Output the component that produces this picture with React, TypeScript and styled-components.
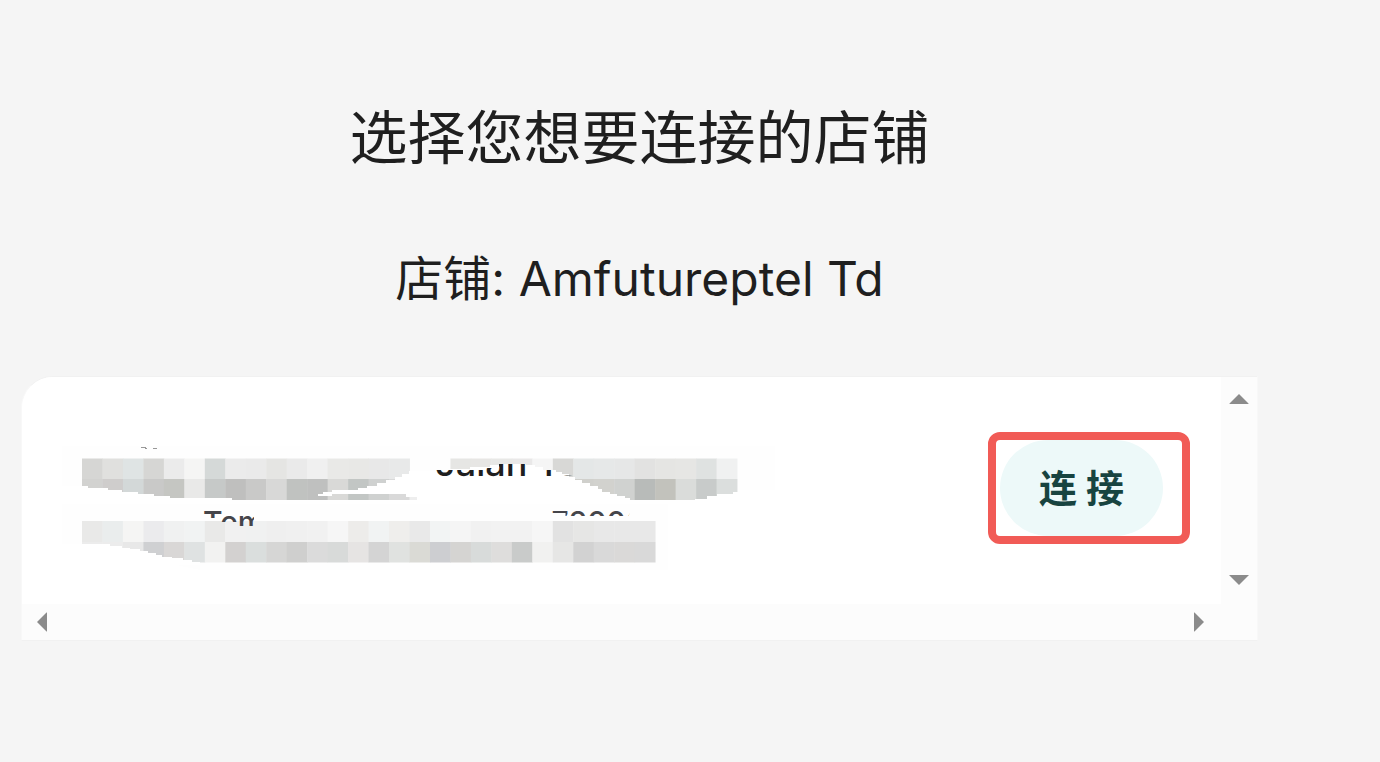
import React from "react";
import styled, { createGlobalStyle } from "styled-components";

const GlobalStyle = createGlobalStyle`
  *, *::before, *::after { box-sizing: border-box; }
  body {
    margin: 0;
    background: #f5f5f5;
    color: #1f1f1f;
    font-family: Inter, "Noto Sans CJK SC", sans-serif;
  }
`;

const Page = styled.main`
  display: flex;
  flex-direction: column;
  padding: 98px 122px 120px 21px;
`;

const Title = styled.h1`
  margin: 0;
  font-size: 58px;
  line-height: 80px;
  font-weight: 400;
  text-align: center;
`;

const ShopName = styled.h2`
  margin: 69px 0 65px;
  font-size: 48px;
  line-height: 64px;
  font-weight: 400;
  text-align: center;
`;

const ScrollPanel = styled.section`
  display: grid;
  grid-template-columns: 1fr 36px;
  grid-template-rows: auto 36px;
  overflow: hidden;
  background: #fcfcfc;
  border: 1px solid #f1f1f1;
  border-left-color: #f8f8f8;
  border-right-color: #f8f8f8;
  border-top-left-radius: 32px;
`;

const ShopRow = styled.div`
  display: flex;
  align-items: center;
  justify-content: space-between;
  min-width: 0;
  min-height: 227px;
  padding: 0 31px 5px 0;
  background: #ffffff;
`;

const Details = styled.div`
  position: relative;
  flex: 1;
  align-self: stretch;
  display: flex;
  flex-direction: column;
  gap: 19px;
  min-width: 0;
  padding-top: 64px;
`;

const Mosaic = styled.svg`
  position: absolute;
  top: 0;
  left: 0;
`;

const DetailLine = styled.div<{ $small?: boolean; $indent: number }>`
  position: relative;
  display: flex;
  justify-content: flex-start;
  gap: 287px;
  padding-left: ${(p) => p.$indent}px;
  font-size: ${(p) => (p.$small ? 30 : 36)}px;
  line-height: ${(p) => (p.$small ? 36 : 44)}px;
  font-weight: 500;
  color: ${(p) => (p.$small ? "#45454a" : "#1f1f1f")};
  white-space: nowrap;
`;

const Fragment = styled.span<{ $clip: string }>`
  clip-path: polygon(${(p) => p.$clip});
`;

const Highlight = styled.div`
  flex: none;
  padding: 0 19px 0 4px;
  border: 8px solid #f15b56;
  border-radius: 12px;
`;

const ConnectButton = styled.button`
  display: block;
  width: 163px;
  height: 96px;
  padding: 0 0 6px;
  border: 0;
  border-radius: 48px;
  background: #edf9f9;
  color: #184440;
  font: inherit;
  font-size: 38px;
  font-weight: 700;
  cursor: pointer;
`;

const Track = styled.div<{ $vertical?: boolean }>`
  display: flex;
  flex-direction: ${(p) => (p.$vertical ? "column" : "row")};
  justify-content: space-between;
  padding: ${(p) => (p.$vertical ? "4px 0 6px" : "0 4px 0 2px")};
`;

const ArrowButton = styled.button`
  display: grid;
  place-items: center;
  width: 36px;
  height: 36px;
  padding: 0;
  border: 0;
  background: transparent;
`;

const arrows = {
  up: "M8.5 23 V22.5 L18 13 L27.5 22.5 V23 Z",
  down: "M8.5 13 H27.5 V13.5 L18 23 L8.5 13.5 Z",
  left: "M13 18 L22.5 8.5 H23 V27.5 H22.5 Z",
  right: "M13 8.5 H13.5 L23 18 L13.5 27.5 H13 Z",
};

function Arrow({ dir, label }: { dir: keyof typeof arrows; label: string }) {
  return (
    <ArrowButton type="button" aria-label={label}>
      <svg width="36" height="36" viewBox="0 0 36 36" aria-hidden="true">
        <path d={arrows[dir]} fill="#8b8b8b" />
      </svg>
    </ArrowButton>
  );
}

// Pixelation tiles, one colour per tile; "-" leaves a tile out.
const tiles = [
  {
    y: 458.5,
    colors:
      "d6d6d4 e0e0de dfe4e4 d6d6d4 ebebeb f5f5f4 d5d9d8 ebebeb eaeaea e5e5e3 eaeaea f0f0f0 e9e9e7 e8e8e6 e8e8e8 e8e9e9 - - e6e6e4 e7e6e4 e8e8e6 e9e8e8 f5f5f5 d8d8d6 e4e7e7 e6e8e8 e6e7e7 e2e2e1 e5e5e3 e6e6e4 dfe2e1 f0f1f1",
  },
  {
    y: 479,
    colors:
      "d2d2d0 cfcdcc d3d8d8 c9c9c8 c5c6c2 e9e9e8 c6c9c8 bfbfbe c9c9c8 d8d8d7 c0c2c0 bfc0bf d9d9d7 c2c6c4 cfd1d0 d9d9d9 eeeeee - - - - - - d0d0cc d0d0cc d2d2ce d0d2d0 b8bbb9 c2c2bc dadcda c8cbca dbdedd",
  },
  {
    y: 521,
    colors:
      "e9e9e8 eaeded f5f5f4 ebebed f0f1f1 f1f3f3 e9e9e8 f1f1f1 f0f1f1 efefef f0f0f0 f1f1f1 f6f6f6 edecea f1f3f3 efeeec e9e9e9 f2f4f4 f5f5f5 f1f1f1 f2f2f2 f2f2f2 f6f6f6 e2e2e2 e6e6e5 e8e8e8 e8e8e8 e8e8e8",
  },
  {
    y: 542,
    colors:
      "ececec ececec e8e8e8 cfd0d2 d9d7d6 dfe2e2 f2f2f1 d3d1d0 dadedd d6d6d5 cfcfce dbdbdb d8dad9 e6e4e3 d4d4d4 e0e2e0 dadad5 cdced1 d5d4d2 d8dbda dedddc c9cbca f1f1f0 e6e6e5 d2d2d2 d9d9d9 dad9d8 d9d9d9",
  },
];

const TILE = 20.47;

function Redaction() {
  return (
    <Mosaic width="760" height="227" viewBox="22 377 760 227" aria-hidden="true">
      <g fill="#fefefe">
        <path d="M62 446H775V490H737V500H62Z" />
        <path d="M62 504H668V570H200L82 545H62Z" />
      </g>
      {tiles.map((row) =>
        row.colors.split(" ").map((c, i) =>
          c === "-" ? null : (
            <rect
              key={`${row.y}-${i}`}
              x={82 + i * TILE}
              y={row.y}
              width={TILE + 0.4}
              height={row.y === 479 || row.y === 521 ? 21 : 20.5}
              fill={`#${c}`}
            />
          )
        )
      )}
      {/* Brush strokes that wipe parts of the tiles away */}
      <g fill="#ffffff" shapeRendering="crispEdges">
        <path d="M60 486H88V488H108V490H122V492H138V494H154V496H170V498H232V500H254V502H60Z" />
        <path d="M318 494H323V492H332V490H358V488H367V486H377V483H386V480H395V477H402V474H409V471H450V469H470V467H490V465H503V464H526V465H535V467H543V470H556V472H562V474H569V477H575V480H582V483H590V486H598V489H602V492H610V494H617V496H625V498H630V502H425V500H417V497H406V494H332V496H318Z" />
        <path d="M695 502V499H707V496H717V494H733V492H740V502Z" />
        <path d="M60 544H110V546H122V548H130V549H140V551H148V553H156V555H162V557H172V558H183V560H192V562H200V565H60Z" />
      </g>
      <path d="M141 447.5h5M145 448.5h2M153 448.5h4" stroke="#777777" strokeWidth="1" opacity="0.75" />
    </Mosaic>
  );
}

export default function App() {
  return (
    <>
      <GlobalStyle />
      <Page lang="zh-CN">
        <Title>选择您想要连接的店铺</Title>
        <ShopName>店铺: Amfutureptel Td</ShopName>
        <ScrollPanel>
          <ShopRow>
            <Details>
              <Redaction />
              <DetailLine $indent={413}>
                <Fragment $clip="0 29px, 50px 29px, 50px 27px, 64px 27px, 64px 23px, 100px 23px, 100px 29px, 121px 29px, 121px 34px, 142px 35px, 142px 44px, 0 44px">
                  Jalan To
                </Fragment>
              </DetailLine>
              <DetailLine $small $indent={181}>
                <Fragment $clip="0 0, 51px 0, 51px 22px, 34px 22px, 34px 18px, 18px 18px, 18px 14px, 0 14px">
                  Tem
                </Fragment>
                <Fragment $clip="0 0, 82px 0, 77px 12px, 14px 12px, 14px 9px, 0 9px">
                  72006
                </Fragment>
              </DetailLine>
            </Details>
            <Highlight>
              <ConnectButton type="button">连 接</ConnectButton>
            </Highlight>
          </ShopRow>
          <Track $vertical>
            <Arrow dir="up" label="向上滚动" />
            <Arrow dir="down" label="向下滚动" />
          </Track>
          <Track>
            <Arrow dir="left" label="向左滚动" />
            <Arrow dir="right" label="向右滚动" />
          </Track>
        </ScrollPanel>
      </Page>
    </>
  );
}
